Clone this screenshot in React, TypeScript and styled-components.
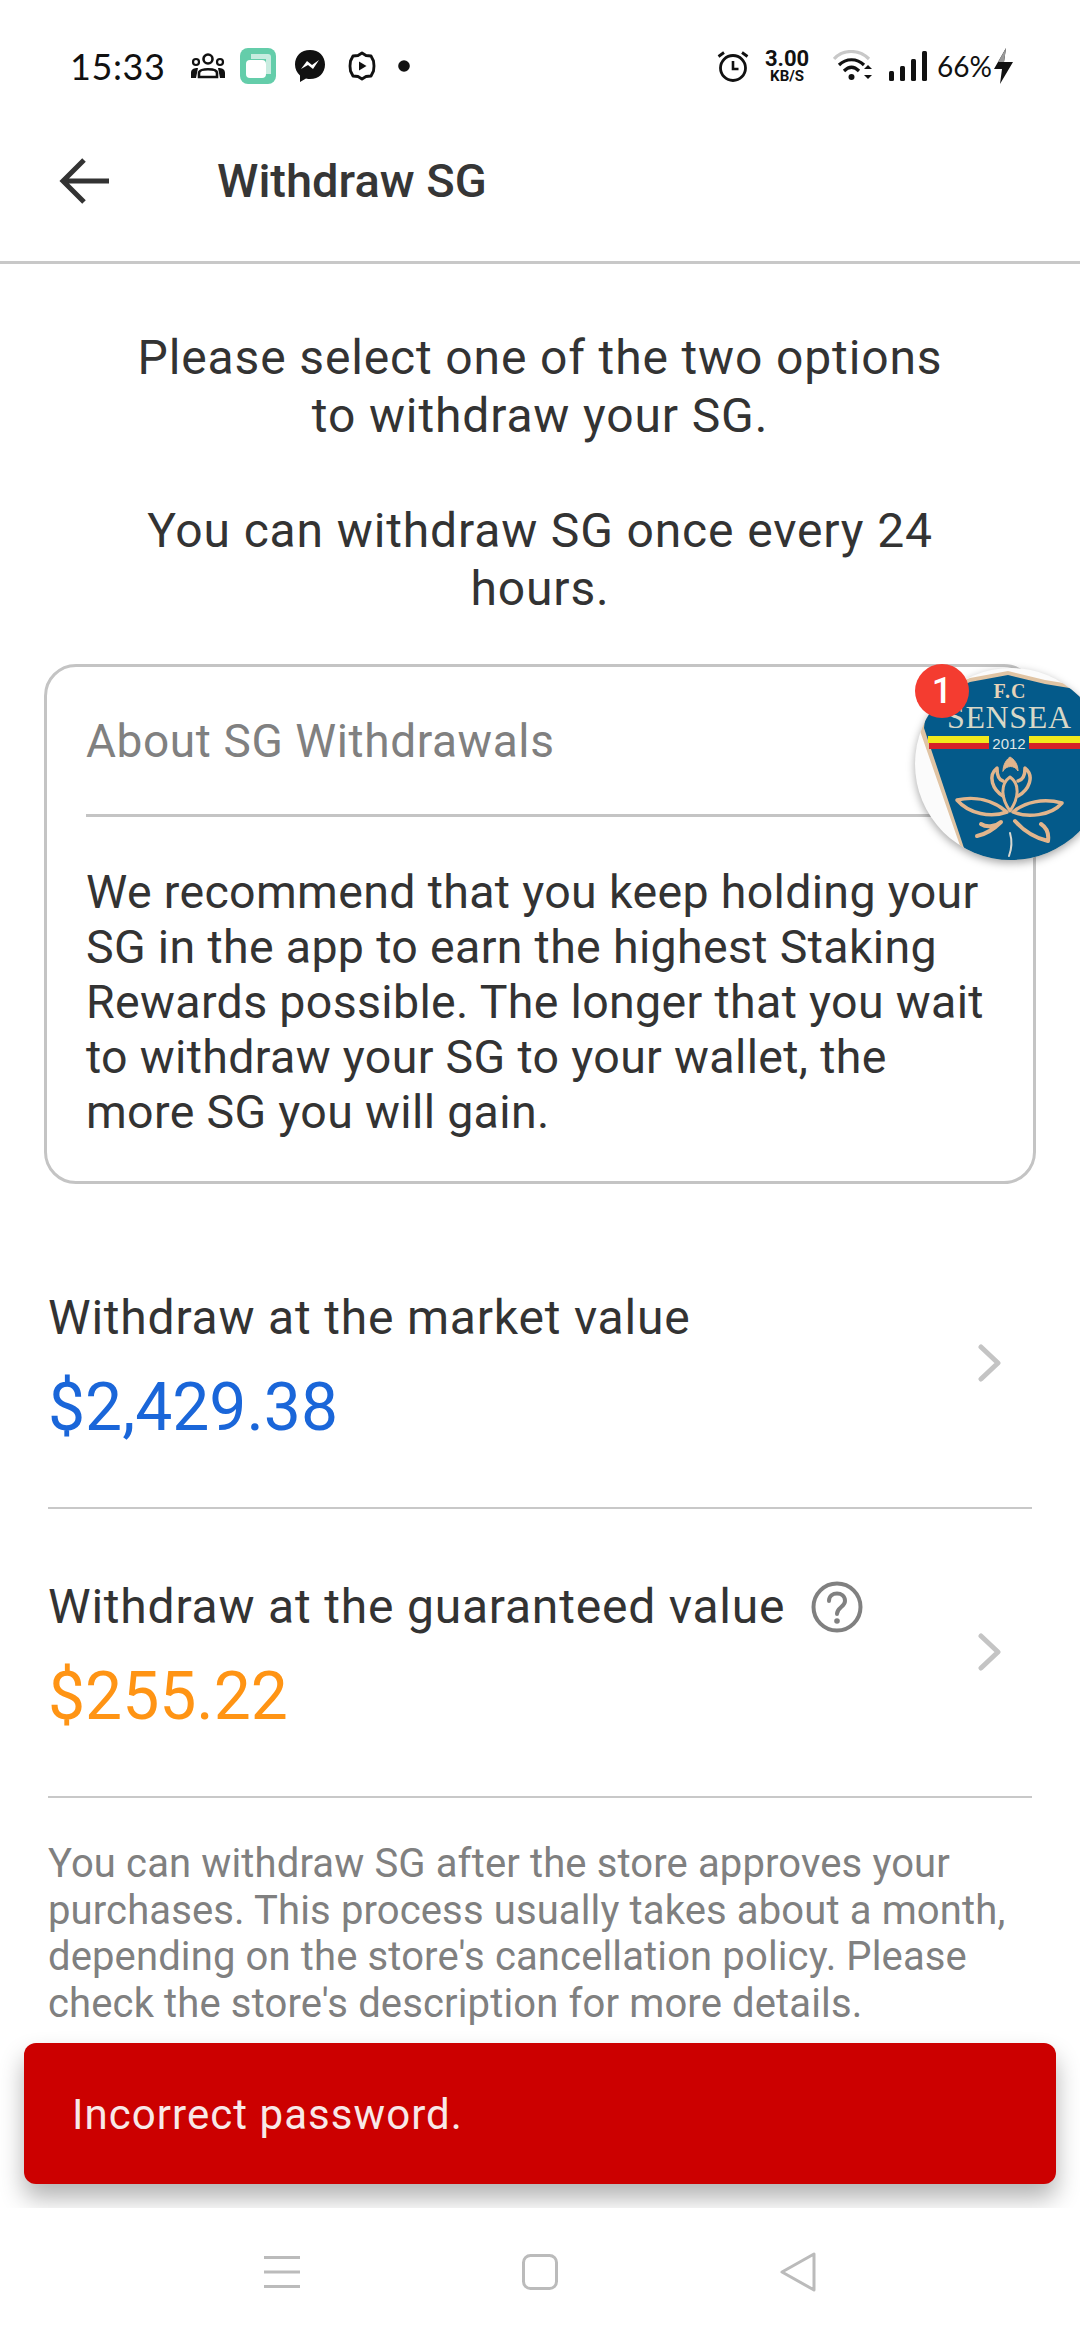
import styled, { createGlobalStyle } from 'styled-components';

const GlobalStyle = createGlobalStyle`
  html, body {
    margin: 0;
    padding: 0;
    background: #ffffff;
  }
  * {
    box-sizing: border-box;
  }
`;

const Screen = styled.div`
  position: relative;
  width: 1080px;
  height: 2340px;
  overflow: hidden;
  display: flex;
  flex-direction: column;
  background: #ffffff;
  font-family: Roboto, 'Liberation Sans', sans-serif;
  color: #333333;
`;

const StatusBar = styled.div`
  height: 100px;
  flex: none;
  padding: 32px 66px 0 70px;
  display: flex;
  justify-content: space-between;
`;

const StatusGroup = styled.div`
  height: 68px;
  display: flex;
  align-items: center;
`;

const Clock = styled.span`
  font-family: Lato, sans-serif;
  font-weight: 400;
  font-size: 36px;
  letter-spacing: 0.6px;
  color: #111111;
  margin-right: 24px;
`;

const StatusIcon = styled.svg<{ $gap?: number }>`
  display: block;
  flex: none;
  margin-right: ${(p) => p.$gap ?? 0}px;
`;

const Speed = styled.div`
  width: 52px;
  margin: 0 20px 0 12px;
  display: flex;
  flex-direction: column;
  align-items: center;
  color: #111111;
  font-weight: 700;
  line-height: 1;
`;

const SpeedValue = styled.span`
  font-size: 22px;
  height: 21px;
`;

const SpeedUnit = styled.span`
  font-size: 15px;
`;

const Battery = styled.span`
  font-family: Lato, sans-serif;
  font-weight: 400;
  font-size: 28px;
  color: #111111;
  margin: 0 2px 0 10px;
`;

const Header = styled.header`
  height: 164px;
  flex: none;
  display: flex;
  align-items: center;
  padding: 0 0 0 59px;
  border-bottom: 3px solid #c8c8c8;
`;

const BackIcon = styled.svg`
  display: block;
  margin-right: 108px;
`;

const Title = styled.h1`
  margin: 0;
  font-size: 47px;
  font-weight: 500;
  color: #363636;
`;

const Content = styled.main`
  flex: 1;
  min-height: 0;
  padding: 65px 44px 0;
`;

const Intro = styled.p`
  margin: 0 auto 46px;
  width: 860px;
  text-align: center;
  font-size: 48px;
  line-height: 57.800px;
  letter-spacing: 0.860px;
`;

const InfoCard = styled.section`
  height: 520px;
  margin-bottom: 36px;
  padding: 0 39px;
  border: 3px solid #c4c4c4;
  border-radius: 32px;
`;

const InfoTitle = styled.h2`
  margin: 0;
  height: 150px;
  padding-top: 2px;
  display: flex;
  align-items: center;
  font-size: 46px;
  font-weight: 400;
  letter-spacing: 0.600px;
  color: #808080;
  border-bottom: 3px solid #c4c4c4;
`;

const InfoBody = styled.p`
  margin: 48px 0 0;
  font-size: 46.500px;
  line-height: 55px;
  letter-spacing: 0.340px;
  color: #333333;
`;

const Option = styled.div`
  height: 289px;
  margin: 0 4px;
  display: flex;
  align-items: center;
  justify-content: space-between;
  border-bottom: 2px solid #c8c8c8;
`;

const OptionText = styled.div`
  padding-top: 10px;
  display: flex;
  flex-direction: column;
`;

const OptionLabel = styled.div`
  display: flex;
  align-items: center;
  gap: 26px;
  font-size: 48px;
  line-height: 60px;
  letter-spacing: 0.800px;
`;

const OptionValue = styled.div<{ $color: string }>`
  margin-top: 20px;
  font-size: 66px;
  line-height: 80px;
  color: ${(p) => p.$color};
`;

const Chevron = styled.svg`
  display: block;
  margin: 0 30px 0 0;
`;

const Note = styled.p`
  margin: 43px 4px 0;
  font-size: 40px;
  line-height: 46.700px;
  letter-spacing: 0.130px;
  color: #808080;
`;

const NavBar = styled.nav`
  height: 132px;
  flex: none;
  position: relative;
  z-index: 2;
  background: #ffffff;
  display: grid;
  grid-template-columns: repeat(3, 36px);
  justify-content: center;
  column-gap: 222px;
  align-items: center;
  padding-bottom: 4px;
`;

const Toast = styled.div`
  position: absolute;
  left: 24px;
  right: 24px;
  top: 2043px;
  height: 141px;
  padding: 2px 0 0 48px;
  display: flex;
  align-items: center;
  border-radius: 12px;
  background: #cc0000;
  color: #f8e8e8;
  font-size: 42px;
  letter-spacing: 1.050px;
  box-shadow: 0 14px 24px rgba(0, 0, 0, 0.3);
`;

const FloatingBubble = styled.div`
  position: absolute;
  left: 915px;
  top: 668px;
  width: 192px;
  height: 192px;
  border-radius: 50%;
  overflow: hidden;
  background: #fbfbfb;
  box-shadow: 0 3px 8px rgba(0, 0, 0, 0.35);
`;

const Badge = styled.div`
  position: absolute;
  left: 915px;
  top: 664px;
  width: 54px;
  height: 54px;
  border-radius: 50%;
  background: #f43c30;
  color: #ffffff;
  font-size: 36px;
  font-weight: 500;
  display: flex;
  align-items: center;
  justify-content: center;
`;

function CrestLogo() {
  return (
    <svg width="192" height="192" viewBox="0 0 192 192">
      <path d="M4 60 L8 30 L55 10 L93 3 L130 12 L192 22 V192 H50 Z" fill="#e0c4a4" />
      <path d="M9 60 L12 34 L55 14 L93 7 L130 16 L192 26 V192 H53 Z" fill="#045a8a" />
      <text x="95" y="30" textAnchor="middle" fontFamily="'Liberation Serif', serif" fontWeight="700" fontSize="20" letterSpacing="1" fill="#e6d3b8">F.C</text>
      <text x="32" y="60" fontFamily="'Liberation Serif', serif" fontSize="32" fill="#d8d8c8" textLength="124">SENSEA</text>
      <rect x="13" y="68" width="61" height="7" fill="#f2ea1c" />
      <rect x="14" y="75" width="60" height="6" fill="#d62028" />
      <rect x="114" y="68" width="78" height="7" fill="#f2ea1c" />
      <rect x="114" y="75" width="78" height="6" fill="#d62028" />
      <text x="94" y="81" textAnchor="middle" fontFamily="'Liberation Sans', sans-serif" fontSize="15" fill="#dfe6e6">2012</text>
      <g fill="none" stroke="#e2b58c" strokeLinecap="round" strokeLinejoin="round">
        <path d="M88 103 C88 96 92 91 95 89 C99 91 103 96 103 103 C100 97 91 97 88 103 Z" fill="#e2b58c" strokeWidth="1" />
        <path d="M88 128 C78 122 72 108 82 100 C82 108 84 112 88 113" strokeWidth="3.500" />
        <path d="M103 128 C114 122 120 108 110 100 C110 108 108 112 103 113" strokeWidth="3.500" />
        <path d="M95 143 C86 130 85 116 95 109 C105 116 104 130 95 143 Z" strokeWidth="3" />
        <path d="M92 144 C78 132 60 128 42 132 C54 146 76 150 92 144 Z" strokeWidth="3.500" />
        <path d="M98 144 C110 134 128 130 147 135 C136 148 112 150 98 144 Z" strokeWidth="3.500" />
        <path d="M62 168 C72 166 80 160 86 154 C82 158 72 160 66 156" strokeWidth="4" />
        <path d="M133 173 C134 166 132 160 126 156 M133 173 C120 170 108 162 100 153" strokeWidth="4" />
        <path d="M95 165 C97 172 97 180 94 188" strokeWidth="2" stroke="#d8d8d0" />
      </g>
    </svg>
  );
}

export default function App() {
  return (
    <>
      <GlobalStyle />
      <Screen>
        <StatusBar>
          <StatusGroup>
            <Clock>15:33</Clock>
            <StatusIcon $gap={14} width="36" height="26" viewBox="0 0 36 26">
              <circle cx="18" cy="6" r="4.500" fill="none" stroke="#111" strokeWidth="2.600" />
              <circle cx="6" cy="9" r="3" fill="none" stroke="#111" strokeWidth="2.200" />
              <circle cx="30" cy="9" r="3" fill="none" stroke="#111" strokeWidth="2.200" />
              <path d="M9 24 V20 C9 15 27 15 27 20 V24 Z" fill="none" stroke="#111" strokeWidth="2.600" />
              <path d="M1 25 V20 C1 16 4 15 8 15 L6 25 Z M35 25 V20 C35 16 32 15 28 15 L30 25 Z" fill="#111" />
            </StatusIcon>
            <StatusIcon $gap={18} width="36" height="36" viewBox="0 0 36 36">
              <rect width="36" height="36" rx="8" fill="#64cdaa" />
              <path d="M11 6 H28 Q31 6 31 9 V26 H26 V11 H11 Z" fill="#c8ece0" />
              <rect x="6" y="12" width="20" height="18" rx="4" fill="#ffffff" />
            </StatusIcon>
            <StatusIcon $gap={22} width="32" height="34" viewBox="0 0 32 34">
              <path d="M16 1 C7 1 1 7 1 15.500 C1 20 3 24 6 26.500 V33 L12 29.500 C13.500 30 15 30 16 30 C25 30 31 24 31 15.500 C31 7 25 1 16 1 Z" fill="#111" />
              <path d="M7 20 L13 12 L18 16 L25 11 L19 20 L14 16 Z" fill="#fff" />
            </StatusIcon>
            <StatusIcon $gap={22} width="28" height="30" viewBox="0 0 28 30">
              <path d="M14 2 L18 4.500 L23 5 L25.500 10 L26 15 L25.500 20 L23 25 L18 25.500 L14 28 L10 25.500 L5 25 L2.500 20 L2 15 L2.500 10 L5 5 L10 4.500 Z" fill="none" stroke="#111" strokeWidth="2.800" strokeLinejoin="round" />
              <path d="M11 10.500 L18.500 15 L11 19.500 Z" fill="#111" />
            </StatusIcon>
            <StatusIcon width="12" height="12" viewBox="0 0 12 12">
              <circle cx="6" cy="6" r="5.800" fill="#111" />
            </StatusIcon>
          </StatusGroup>
          <StatusGroup>
            <StatusIcon width="32" height="32" viewBox="0 0 32 32">
              <circle cx="16" cy="18" r="12.500" fill="none" stroke="#111" strokeWidth="2.800" />
              <path d="M16 11 V19 H21.500" fill="none" stroke="#111" strokeWidth="2.600" />
              <path d="M1.500 6.500 L7 2.500 M30.500 6.500 L25 2.500" stroke="#111" strokeWidth="2.800" />
            </StatusIcon>
            <Speed>
              <SpeedValue>3.00</SpeedValue>
              <SpeedUnit>KB/S</SpeedUnit>
            </Speed>
            <StatusIcon $gap={14} width="42" height="32" viewBox="0 0 42 32">
              <path d="M1 9 C10 -1 26 -1 36 9" fill="none" stroke="#c8c8c8" strokeWidth="3.200" />
              <path d="M6 15 C13 8 24 8 31 15" fill="none" stroke="#111" strokeWidth="3.200" />
              <path d="M11 21 C16 16 21 16 26 21" fill="none" stroke="#111" strokeWidth="3.200" />
              <circle cx="18.500" cy="27" r="3" fill="#111" />
              <path d="M35 15 L39 19 H31 Z M35 29 L39 25 H31 Z" fill="#111" />
            </StatusIcon>
            <StatusIcon width="38" height="30" viewBox="0 0 38 30">
              <rect x="0" y="20" width="5" height="10" rx="1.500" fill="#111" />
              <rect x="11" y="15" width="5" height="15" rx="1.500" fill="#111" />
              <rect x="22" y="8" width="5" height="22" rx="1.500" fill="#111" />
              <rect x="33" y="0" width="5" height="30" rx="1.500" fill="#111" />
            </StatusIcon>
            <Battery>66%</Battery>
            <StatusIcon width="20" height="36" viewBox="0 0 20 36">
              <path d="M12 0 L0 21 H8 L6 36 L19 14 H10 Z" fill="#111" />
              <path d="M12 0 L4 14 H10 Z" fill="#999" />
            </StatusIcon>
          </StatusGroup>
        </StatusBar>

        <Header>
          <BackIcon width="50" height="48" viewBox="0 0 50 48">
            <path d="M25 3 L4 24 L25 45 M4 24 H50" fill="none" stroke="#333" strokeWidth="5" />
          </BackIcon>
          <Title>Withdraw SG</Title>
        </Header>

        <Content>
          <Intro>
            Please select one of the two options
            <br />
            to withdraw your SG.
            <br />
            <br />
            You can withdraw SG once every 24 hours.
          </Intro>

          <InfoCard>
            <InfoTitle>About SG Withdrawals</InfoTitle>
            <InfoBody>
              We recommend that you keep holding your SG in the app to earn the highest Staking
              Rewards possible. The longer that you wait to withdraw your SG to your wallet, the
              more SG you will gain.
            </InfoBody>
          </InfoCard>

          <Option>
            <OptionText>
              <OptionLabel>Withdraw at the market value</OptionLabel>
              <OptionValue $color="#1a66d9">$2,429.38</OptionValue>
            </OptionText>
            <Chevron width="24" height="38" viewBox="0 0 24 38">
              <path d="M3 3 L20 19 L3 35" fill="none" stroke="#c4c4c4" strokeWidth="5" strokeLinecap="round" strokeLinejoin="round" />
            </Chevron>
          </Option>

          <Option>
            <OptionText>
              <OptionLabel>
                Withdraw at the guaranteed value
                <svg width="52" height="52" viewBox="0 0 52 52">
                  <circle cx="26" cy="26" r="23.500" fill="none" stroke="#808080" strokeWidth="4" />
                  <path d="M18 20 C18 10 34 10 34 20 C34 26 26 26 26 33" fill="none" stroke="#808080" strokeWidth="4" strokeLinecap="round" />
                  <circle cx="26" cy="40" r="2.800" fill="#808080" />
                </svg>
              </OptionLabel>
              <OptionValue $color="#ff9414">$255.22</OptionValue>
            </OptionText>
            <Chevron width="24" height="38" viewBox="0 0 24 38">
              <path d="M3 3 L20 19 L3 35" fill="none" stroke="#c4c4c4" strokeWidth="5" strokeLinecap="round" strokeLinejoin="round" />
            </Chevron>
          </Option>

          <Note>
            You can withdraw SG after the store approves your purchases. This process usually takes
            about a month, depending on the store's cancellation policy. Please check the store's
            description for more details.
          </Note>
        </Content>

        <NavBar>
          <svg width="36" height="32" viewBox="0 0 36 32">
            <path d="M0 1.500 H36 M0 16 H36 M0 30.500 H36" stroke="#bbbbbb" strokeWidth="3" />
          </svg>
          <svg width="36" height="36" viewBox="0 0 36 36">
            <rect x="1.500" y="1.500" width="33" height="33" rx="7" fill="none" stroke="#bbbbbb" strokeWidth="3" />
          </svg>
          <svg width="36" height="40" viewBox="0 0 36 40">
            <path d="M34 2 V38 L2 20 Z" fill="none" stroke="#bbbbbb" strokeWidth="3" strokeLinejoin="round" />
          </svg>
        </NavBar>

        <FloatingBubble>
          <CrestLogo />
        </FloatingBubble>
        <Badge>1</Badge>
        <Toast>Incorrect password.</Toast>
      </Screen>
    </>
  );
}
